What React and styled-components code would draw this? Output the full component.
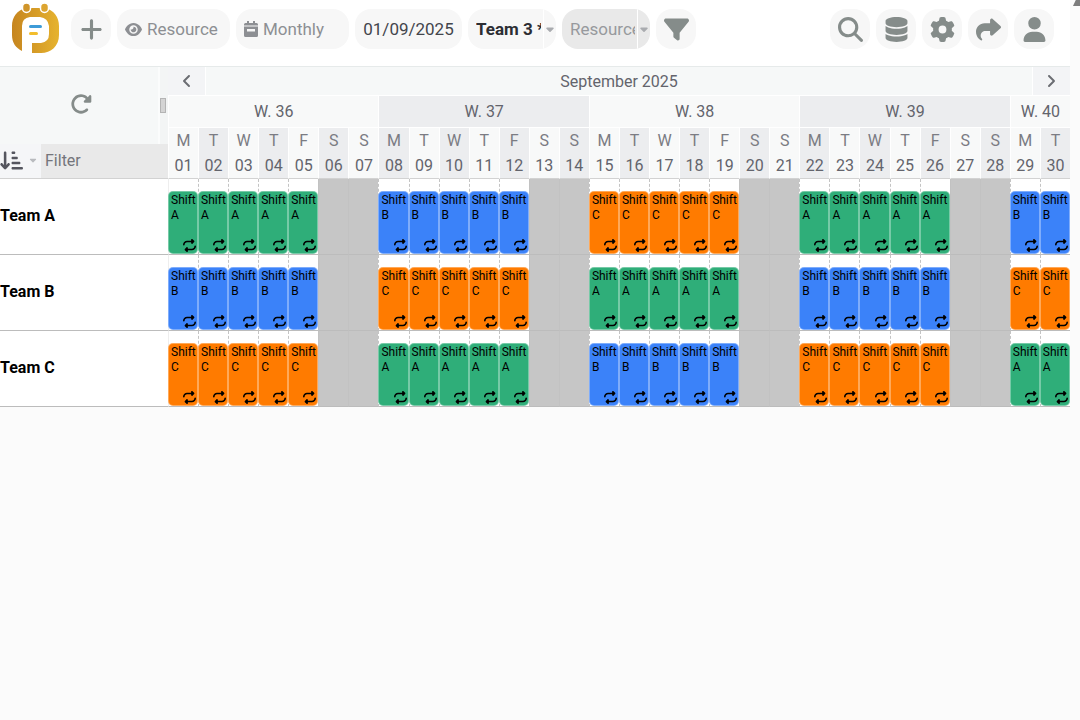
import React from 'react'
import styled, { createGlobalStyle } from 'styled-components'
import {
  FaRotateRight, FaArrowDownShortWide, FaDatabase, FaEye, FaFilter, FaGear,
  FaMagnifyingGlass, FaPlus, FaRepeat, FaShare, FaUser, FaCaretDown, FaAngleLeft, FaAngleRight,
} from 'react-icons/fa6'

const GlobalStyle = createGlobalStyle`
  * {
    box-sizing: border-box;
  }
  body {
    margin: 0;
    background: #fbfbfb;
    color: #000;
    font-family: Roboto, sans-serif;
    font-size: 16px;
  }
  button, input, select {
    font: inherit;
    border: 0;
    outline: 0;
    margin: 0;
    padding: 0;
  }
  button {
    cursor: pointer;
  }
`

const Page = styled.div`
  position: relative;
  padding-right: 10px;
`

const ScrollUp = styled.div`
  position: absolute;
  top: 0;
  right: 0;
  width: 7px;
  height: 6px;
  background: #7d7d7d;
  clip-path: polygon(100% 0, 40% 0, 0 100%, 100% 100%);
`

const Toolbar = styled.header`
  display: flex;
  align-items: center;
  gap: 6px;
  height: 66px;
  padding: 0 16px 8px 12px;
  background: #fff;
`

const Group = styled.div`
  display: flex;
  gap: 6px;
  align-items: center;
`

const Actions = styled(Group)`
  margin-left: auto;
`

const LogoLink = styled.a`
  display: flex;
  margin-right: 6px;
`

const RoundButton = styled.button`
  display: flex;
  align-items: center;
  justify-content: center;
  width: 40px;
  height: 40px;
  border-radius: 16px;
  background: #f7f7f7;
  color: #858c8a;
  font-size: 25px;
`

const Pill = styled.button`
  display: flex;
  align-items: center;
  gap: 5px;
  width: 113px;
  height: 40px;
  padding: 0 8px;
  border-radius: 16px;
  background: #f7f7f7;
  color: #8d8f93;
  font-size: 17px;
`

const DateInput = styled.input`
  width: 107px;
  height: 40px;
  border-radius: 16px;
  background: #f7f7f7;
  color: #43454c;
  font-size: 17px;
  text-align: center;
`

const SelectWrap = styled.label`
  display: flex;
  align-items: center;
  height: 40px;
  border-radius: 16px;
  overflow: hidden;
  background: ${({ $dark }) => ($dark ? '#e9e9e9' : '#f7f7f7')};
  color: #a9abaf;
  font-size: 12px;
`

const Select = styled.select`
  appearance: none;
  width: 76px;
  height: 40px;
  padding: 0 2px 0 8px;
  border-right: 1px solid #fff;
  background: none;
  color: ${({ $bold }) => ($bold ? '#2c2d33' : '#97999d')};
  font-size: 17px;
  font-weight: ${({ $bold }) => ($bold ? 700 : 400)};
  text-overflow: clip;
`

const Planning = styled.table`
  width: 100%;
  table-layout: fixed;
  border-collapse: separate;
  border-spacing: 0;
  background: #fff;
`

const NameCol = styled.col`
  width: 168px;
`

const Corner = styled.th`
  padding: 0;
  height: 113px;
  border-top: 1px solid #e6eaea;
  border-bottom: 1px solid #d2d2d2;
  background: #f6f8f8;
  font-weight: 400;
  vertical-align: top;
`

const CornerTop = styled.div`
  display: flex;
  height: 77px;
`

const Refresh = styled.button`
  flex: 1;
  display: flex;
  align-items: center;
  justify-content: center;
  padding: 0 0 4px 4px;
  background: none;
  color: #858c8a;
  font-size: 22px;
`

const Splitter = styled.div`
  display: flex;
  align-items: center;
  width: 10px;
  border-left: 2px solid #fbfcfc;
  background: #f3f5f5;

  &:before {
    content: "";
    width: 4px;
    height: 13px;
    border: 1px solid #b4b4b4;
    background: #d4d4d4;
  }
`

const FilterBar = styled.div`
  display: flex;
  align-items: center;
  height: 34px;
`

const SortButton = styled.button`
  display: flex;
  align-items: center;
  justify-content: space-between;
  width: 41px;
  height: 34px;
  padding: 0 3px 2px 0;
  background: #f5f6f8;
  color: #55565f;
  font-size: 23px;
`

const FilterInput = styled.input`
  flex: 1;
  min-width: 0;
  height: 34px;
  padding: 0 4px 2px;
  background: #e9e9e9;

  &::placeholder {
    color: #74757b;
    opacity: 1;
  }
`

const MonthCell = styled.th`
  padding: 0;
  height: 30px;
  border-top: 1px solid #e6eaea;
  border-bottom: 1px solid #fff;
  background: #f6f8f8;
  color: #63646c;
  font-weight: 400;
`

const MonthBar = styled.div`
  display: flex;
  align-items: center;
  justify-content: space-between;
`

const Step = styled.button`
  display: flex;
  align-items: center;
  justify-content: center;
  width: 38px;
  height: 28px;
  border: solid #fff;
  border-width: ${({ $next }) => ($next ? '0 0 0 1px' : '0 1px 0 0')};
  background: #f3f4f6;
  color: #6b6d73;
`

const HeadCell = styled.th`
  padding: 0;
  height: 32px;
  border: solid #fff;
  border-width: 0 0 1px 1px;
  background: ${({ $shade }) => ($shade ? '#ecedef' : '#f8f9f9')};
  color: #63646c;
  font-weight: 400;
  line-height: 25px;
`

const DayCell = styled(HeadCell)`
  height: 51px;
  border-bottom-color: #d2d2d2;
`

const DayLetter = styled.div`
  color: #7b7c83;
`

const Name = styled.th`
  height: 76px;
  padding: 0 0 2px;
  border-bottom: 1px solid #bcbcbc;
  text-align: left;
  font-weight: 700;
`

const Slot = styled.td`
  height: 76px;
  padding: 12px 0 0;
  border-bottom: 1px solid #bcbcbc;
  border-left: 1px ${({ $first }) => ($first ? 'solid #eee' : 'dashed #c4c4c4')};
  vertical-align: top;
  ${({ $off }) => $off && `
    background: #c6c6c6;
    border-left: 1px solid #c2c2c2;
  `}
`

const shiftColors = { A: '#2fae79', B: '#3b82f9', C: '#ff7b00' }

const Shift = styled.div`
  display: flex;
  flex-direction: column;
  justify-content: space-between;
  height: 63px;
  padding: 1px 1px 1px 2px;
  margin-left: -1px;
  border: 1px solid rgba(255, 255, 255, 0.35);
  border-radius: 5px;
  background: ${({ $kind }) => shiftColors[$kind]};
  overflow: hidden;
  font-size: 12px;
  line-height: 15px;

  svg {
    flex: none;
    align-self: flex-end;
    font-size: 13px;
  }
`

const weeks = [
  { no: 36, days: 7 },
  { no: 37, days: 7 },
  { no: 38, days: 7 },
  { no: 39, days: 7 },
  { no: 40, days: 2 },
]

const days = Array.from({ length: 30 }, (_, i) => ({
  no: String(i + 1).padStart(2, '0'),
  letter: 'MTWTFSS'[i % 7],
  week: Math.floor(i / 7),
  off: i % 7 > 4,
}))

const teams = [
  { name: 'Team A', shifts: 'ABCAB' },
  { name: 'Team B', shifts: 'BCABC' },
  { name: 'Team C', shifts: 'CABCA' },
]

const Logo = () => (
  <svg width="47" height="54" viewBox="0 0 47 54">
    <defs>
      <linearGradient id="gold" x1="0" y1="0" x2="1" y2="0">
        <stop offset="0" stopColor="#c6851f" />
        <stop offset="1" stopColor="#e6b32f" />
      </linearGradient>
    </defs>
    <path d="M14 6H33C42 8 47 15 47 24V33C47 44 39 51 29 51H20V41H29Q37 40 37 32V24Q36 16 28 15H18Q10 16 10 24V49C4 46 0 41 0 33V24C0 15 5 8 14 6Z" fill="url(#gold)" />
    <rect x="10.500" y="1" width="8" height="9.500" rx="4" fill="#d0952a" stroke="#fff" strokeWidth="1.500" />
    <rect x="28.500" y="1" width="8" height="9.500" rx="4" fill="#dda530" stroke="#fff" strokeWidth="1.500" />
    <rect x="17" y="23" width="13" height="3" rx="1.500" fill="#3d9bd8" />
    <rect x="17" y="30" width="9" height="3" rx="1.500" fill="#f2bd2c" />
  </svg>
)

const CalendarIcon = () => (
  <svg width="14" height="16" viewBox="0 0 14 16" fill="currentColor">
    <path fillRule="evenodd" d="M3 0H5V2H9V0H11V2H12.500Q14 2 14 3.500V4.500H0V3.500Q0 2 1.500 2H3ZM0 5.500H14V14.500Q14 16 12.500 16H1.500Q0 16 0 14.500ZM3 8V10.500H11V8Z" />
  </svg>
)

export default function App() {
  return (
    <Page>
      <GlobalStyle />
      <Toolbar>
        <LogoLink href="#" aria-label="Home"><Logo /></LogoLink>
        <Group>
          <RoundButton aria-label="Add"><FaPlus /></RoundButton>
          <Pill><FaEye />Resource</Pill>
          <Pill><CalendarIcon />Monthly</Pill>
          <DateInput aria-label="Start date" defaultValue="01/09/2025" />
          <SelectWrap>
            <Select $bold aria-label="View"><option>Team 3 *</option></Select>
            <FaCaretDown />
          </SelectWrap>
          <SelectWrap $dark>
            <Select aria-label="Group by"><option>Resource</option></Select>
            <FaCaretDown />
          </SelectWrap>
          <RoundButton aria-label="Filter"><FaFilter /></RoundButton>
        </Group>
        <Actions>
          <RoundButton aria-label="Search"><FaMagnifyingGlass /></RoundButton>
          <RoundButton aria-label="Data"><FaDatabase /></RoundButton>
          <RoundButton aria-label="Settings"><FaGear /></RoundButton>
          <RoundButton aria-label="Share"><FaShare /></RoundButton>
          <RoundButton aria-label="Account"><FaUser /></RoundButton>
        </Actions>
      </Toolbar>
      <Planning>
        <colgroup>
          <NameCol />
          {days.map((day) => <col key={day.no} />)}
        </colgroup>
        <thead>
          <tr>
            <Corner rowSpan={3}>
              <CornerTop>
                <Refresh aria-label="Refresh"><FaRotateRight /></Refresh>
                <Splitter />
              </CornerTop>
              <FilterBar>
                <SortButton aria-label="Sort"><FaArrowDownShortWide /><FaCaretDown size={10} color="#b9bbbf" /></SortButton>
                <FilterInput aria-label="Filter resources" placeholder="Filter" />
              </FilterBar>
            </Corner>
            <MonthCell colSpan={30}>
              <MonthBar>
                <Step aria-label="Previous month"><FaAngleLeft /></Step>
                September 2025
                <Step $next aria-label="Next month"><FaAngleRight /></Step>
              </MonthBar>
            </MonthCell>
          </tr>
          <tr>
            {weeks.map((week, i) => (
              <HeadCell key={week.no} colSpan={week.days} $shade={i % 2 === 1}>W. {week.no}</HeadCell>
            ))}
          </tr>
          <tr>
            {days.map((day, i) => (
              <DayCell key={day.no} $shade={i % 2 === 1}>
                <DayLetter>{day.letter}</DayLetter>
                {day.no}
              </DayCell>
            ))}
          </tr>
        </thead>
        <tbody>
          {teams.map((team) => (
            <tr key={team.name}>
              <Name scope="row">{team.name}</Name>
              {days.map((day, i) => (
                <Slot key={day.no} $off={day.off} $first={i === 0}>
                  {!day.off && (
                    <Shift $kind={team.shifts[day.week]}>
                      Shift {team.shifts[day.week]}
                      <FaRepeat />
                    </Shift>
                  )}
                </Slot>
              ))}
            </tr>
          ))}
        </tbody>
      </Planning>
      <ScrollUp />
    </Page>
  )
}
